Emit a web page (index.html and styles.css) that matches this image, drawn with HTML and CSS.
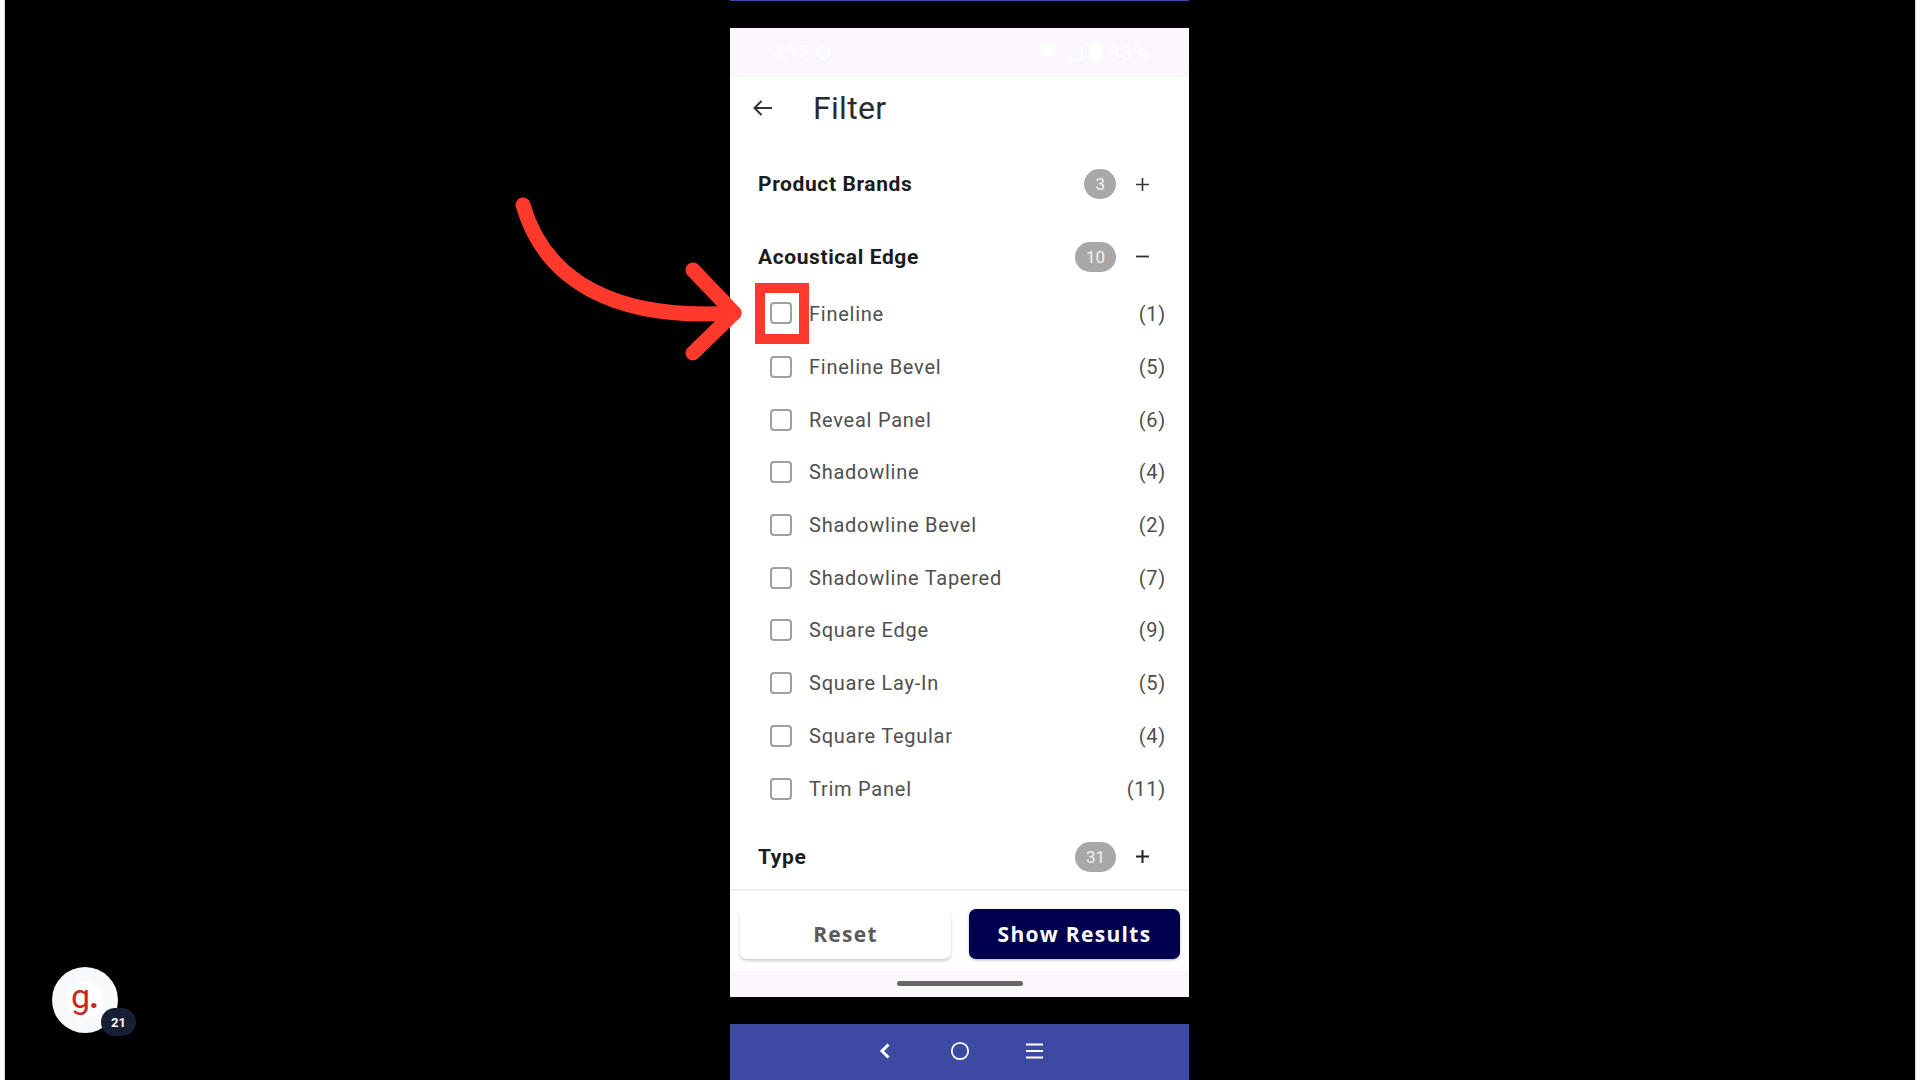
FILE: index.html
```html
<!DOCTYPE html>
<html lang="en">
<head>
    <meta charset="UTF-8">
    <title>Filter</title>
    <link rel="stylesheet" href="styles.css">
</head>
<body>
    <div class="stage">
        <div class="phone">
            <div class="top-line"></div>
            <div class="screen">
                <div class="status-bar">
                    <div class="status-left">
                        <span>4:15</span>
                        <svg width="15" height="15" viewBox="0 0 15 15"><circle cx="7.500" cy="7.500" r="6" fill="none" stroke="#fff" stroke-width="2"/></svg>
                    </div>
                    <div class="status-right">
                        <svg width="20" height="15" viewBox="0 0 20 15"><path d="M0 3 Q10 -3 20 3 L10 15 Z" fill="#fff"/></svg>
                        <svg width="18" height="16" viewBox="0 0 18 16"><path d="M1 15 L17 1 V15 Z" fill="none" stroke="#fff" stroke-width="1.500"/></svg>
                        <svg width="12" height="17" viewBox="0 0 12 17"><rect y="2" width="12" height="15" rx="1" fill="#fff"/><rect x="3" width="6" height="2" fill="#fff"/></svg>
                        <span class="battery">83%</span>
                    </div>
                </div>
                <div class="app-bar">
                    <svg class="back-arrow" width="22" height="18" viewBox="0 0 22 18"><path d="M20 9 H2.500 M9.500 2 L2.500 9 L9.500 16" fill="none" stroke="#333" stroke-width="2"/></svg>
                    <h1>Filter</h1>
                </div>
                <div class="filter-list">
                    <div class="section-row first">
                        <span class="section-title">Product Brands</span>
                        <span class="badge">3</span>
                        <svg class="toggle" width="13" height="13" viewBox="0 0 13 13"><path d="M0 6.500 H13 M6.500 0 V13" stroke="#333" stroke-width="1.600"/></svg>
                    </div>
                    <div class="section-row open">
                        <span class="section-title">Acoustical Edge</span>
                        <span class="badge">10</span>
                        <svg class="toggle" width="13" height="13" viewBox="0 0 13 13"><path d="M0 6.500 H13" stroke="#333" stroke-width="1.800"/></svg>
                    </div>
                    <ul class="options">
                        <li><span class="check marked"><span class="box"></span></span><span class="name">Fineline</span><span class="count">(1)</span></li>
                        <li><span class="check"><span class="box"></span></span><span class="name">Fineline Bevel</span><span class="count">(5)</span></li>
                        <li><span class="check"><span class="box"></span></span><span class="name">Reveal Panel</span><span class="count">(6)</span></li>
                        <li><span class="check"><span class="box"></span></span><span class="name">Shadowline</span><span class="count">(4)</span></li>
                        <li><span class="check"><span class="box"></span></span><span class="name">Shadowline Bevel</span><span class="count">(2)</span></li>
                        <li><span class="check"><span class="box"></span></span><span class="name">Shadowline Tapered</span><span class="count">(7)</span></li>
                        <li><span class="check"><span class="box"></span></span><span class="name">Square Edge</span><span class="count">(9)</span></li>
                        <li><span class="check"><span class="box"></span></span><span class="name">Square Lay-In</span><span class="count">(5)</span></li>
                        <li><span class="check"><span class="box"></span></span><span class="name">Square Tegular</span><span class="count">(4)</span></li>
                        <li><span class="check"><span class="box"></span></span><span class="name">Trim Panel</span><span class="count">(11)</span></li>
                    </ul>
                    <div class="section-row last">
                        <span class="section-title">Type</span>
                        <span class="badge">31</span>
                        <svg class="toggle" width="13" height="13" viewBox="0 0 13 13"><path d="M0 6.500 H13 M6.500 0 V13" stroke="#222" stroke-width="2"/></svg>
                    </div>
                </div>
                <div class="actions">
                    <button class="btn reset">Reset</button>
                    <button class="btn show">Show Results</button>
                </div>
                <div class="home-area"><div class="home-bar"></div></div>
            </div>
            <div class="nav-bar">
                <svg width="18" height="20" viewBox="0 0 18 20"><path d="M12.500 3.500 L6 10 L12.500 16.500" fill="none" stroke="#fff" stroke-width="3"/></svg>
                <svg width="20" height="20" viewBox="0 0 20 20"><circle cx="10" cy="10" r="8.200" fill="none" stroke="#fff" stroke-width="1.800"/></svg>
                <svg width="18" height="16" viewBox="0 0 18 16"><path d="M0 1.500 H17 M0 8 H17 M0 14.500 H17" stroke="#fff" stroke-width="2.200"/></svg>
            </div>
        </div>

        <!-- annotation arrow pointing at the first checkbox -->
        <svg class="arrow" width="240" height="190" viewBox="0 0 240 190">
            <path d="M8 12 C30 88 100 128 219 120" fill="none" stroke="#ff3a2d" stroke-width="15" stroke-linecap="round"/>
            <path d="M178 77 L219 120 L178 160" fill="none" stroke="#ff3a2d" stroke-width="15" stroke-linecap="round" stroke-linejoin="round"/>
        </svg>

        <div class="widget">
            <span class="widget-logo">g<i>.</i></span>
            <span class="widget-count">21</span>
        </div>
    </div>
</body>
</html>
```

FILE: styles.css
```css
* {
    box-sizing: border-box;
}

html, body {
    margin: 0;
    height: 100%;
}

body {
    font-family: Roboto, sans-serif;
    background: #fff;
    overflow: hidden;
}

.stage {
    position: relative;
    height: 1080px;
    margin: 0 4px;
    background: #000;
    border-left: 1px solid #d8d8d8;
    border-right: 1px solid #d8d8d8;
    display: flex;
    justify-content: center;
}

.phone {
    width: 459px;
    height: 1080px;
    margin-right: 1px;
    display: flex;
    flex-direction: column;
}

.top-line {
    height: 1px;
    background: #3d4aa3;
    margin-bottom: 27px;
}

.screen {
    height: 969px;
    background: #fff;
    display: flex;
    flex-direction: column;
}

.status-bar {
    height: 49px;
    background: #fbf7fd;
    padding: 0 40px 0 42px;
    display: flex;
    justify-content: space-between;
    align-items: center;
    color: #fff;
    font-size: 20px;
}

.status-left, .status-right {
    display: flex;
    align-items: center;
    gap: 5px;
}

.status-right {
    gap: 7px;
}

.battery {
    letter-spacing: 1px;
}

.app-bar {
    height: 61px;
    display: flex;
    align-items: center;
    padding-left: 22px;
}

.back-arrow {
    margin-right: 39px;
}

.app-bar h1 {
    margin: 0;
    font-size: 32px;
    font-weight: 400;
    letter-spacing: 0.3px;
    color: #2b2b2b;
}

.filter-list {
    flex: 1;
}

.section-row {
    height: 72px;
    display: flex;
    align-items: center;
    padding: 0 40px 0 28px;
}

.section-row.first {
    margin-top: 10px;
}

.section-row.open {
    height: 63px;
    margin-top: 5px;
}

.section-row.last {
    margin-top: 10px;
    height: 64px;
}

.section-title {
    flex: 1;
    font-size: 21px;
    font-weight: 700;
    color: #1c1c1c;
    letter-spacing: 0.6px;
}

.badge {
    min-width: 30px;
    height: 30px;
    padding: 0 11px;
    margin-right: 20px;
    border-radius: 15px;
    background: #a8a8a8;
    color: #f2f2f2;
    font-size: 17px;
    display: flex;
    align-items: center;
    justify-content: center;
}

.options {
    list-style: none;
    margin: 0;
    padding: 0;
}

.options li {
    height: 52.700px;
    display: flex;
    align-items: center;
    padding: 0 23px 0 26px;
    font-size: 20px;
    letter-spacing: 0.75px;
    color: #4f4f4f;
}

.check {
    width: 53px;
    display: flex;
    align-items: center;
}

.box {
    width: 22px;
    height: 22px;
    margin-left: 14px;
    border: 2px solid #a0a0a0;
    border-radius: 4px;
}

/* red highlight round the first checkbox, drawn over the row */
.check.marked {
    outline: 10px solid #ff3a2d;
    outline-offset: -10px;
    height: 61px;
    width: 54px;
    margin-left: -1px;
    margin-top: -2px;
}

.check.marked .box {
    margin-left: 15px;
}

.name {
    flex: 1;
}

.actions {
    height: 82px;
    border-top: 2px solid #eee;
    padding: 18px 9px 0 10px;
    display: flex;
    gap: 18px;
}

.btn {
    flex: 1;
    height: 50px;
    padding-top: 1px;
    border: none;
    border-radius: 7px;
    font-family: "Open Sans", sans-serif;
    font-size: 21px;
    font-weight: 700;
    letter-spacing: 1.3px;
}

.reset {
    background: #fff;
    color: #5a5a5a;
    box-shadow: 0 2px 3px rgba(0, 0, 0, 0.2);
}

.show {
    background: #00004f;
    color: #fff;
    box-shadow: 0 1px 3px rgba(0, 0, 0, 0.3);
}

.home-area {
    flex: 1;
    background: #fbf7fd;
    display: flex;
    justify-content: center;
    padding-top: 10px;
}

.home-bar {
    width: 126px;
    height: 5px;
    border-radius: 3px;
    background: #666;
}

.nav-bar {
    height: 56px;
    margin-top: 27px;
    padding-bottom: 2px;
    background: #3d4aa3;
    display: flex;
    justify-content: center;
    align-items: center;
    gap: 56px;
}

.arrow {
    position: absolute;
    left: 510px;
    top: 193px;
}

.widget {
    position: absolute;
    left: 47px;
    top: 967px;
    width: 66px;
    height: 66px;
    border-radius: 50%;
    background: #f8f9fb;
    display: flex;
    align-items: center;
    justify-content: center;
}

.widget-logo {
    width: 38px;
    height: 38px;
    border-radius: 50%;
    background: #fff;
    font-family: Roboto, sans-serif;
    font-size: 34px;
    line-height: 30px;
    text-align: center;
    color: #c8281e;
}

.widget-logo i {
    font-style: normal;
    font-weight: 700;
    margin-left: -1px;
}

.widget-count {
    position: absolute;
    left: 49px;
    top: 41px;
    width: 35px;
    height: 28px;
    border-radius: 14px;
    background: #161f33;
    color: #fff;
    font-size: 13px;
    font-weight: 700;
    display: flex;
    align-items: center;
    justify-content: center;
}
```
